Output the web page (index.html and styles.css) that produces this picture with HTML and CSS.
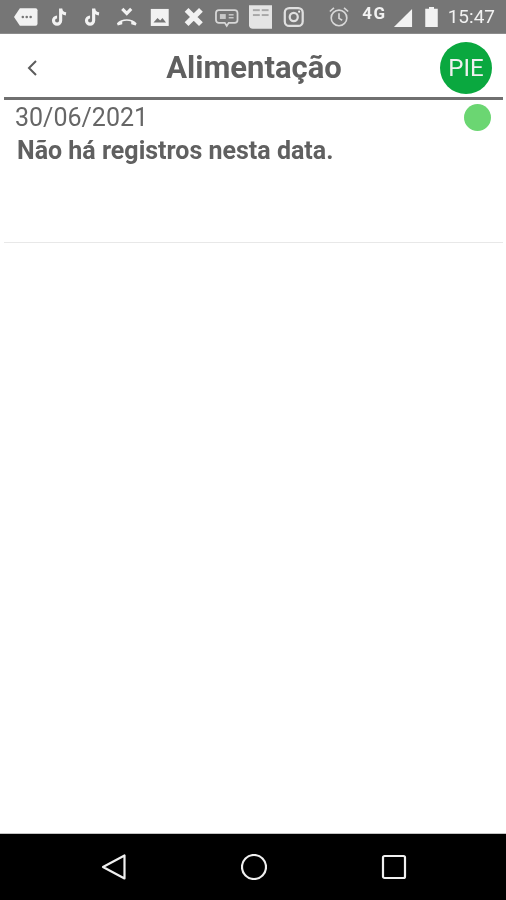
FILE: index.html
```html
<!DOCTYPE html>
<html lang="pt-BR">
<head>
  <meta charset="UTF-8">
  <meta name="viewport" content="width=device-width, initial-scale=1.0">
  <title>Alimentação</title>
  <link rel="stylesheet" href="styles.css">
</head>
<body>

  <div class="screen">

    <!-- Android status bar -->
    <div class="status-bar">
      <div class="notif-icons">
        <svg class="wide" viewBox="0 0 24 24"><path class="fill" d="M6 3h16a2 2 0 0 1 2 2v14a2 2 0 0 1-2 2H6l-6-9z"/><circle class="dark" cx="9" cy="12" r="1.3"/><circle class="dark" cx="13" cy="12" r="1.3"/><circle class="dark" cx="17" cy="12" r="1.3"/></svg>
        <svg viewBox="0 0 24 24"><path class="line" d="M13 2.5v13.5a4 4 0 1 1-4-4"/><path class="line" d="M13 3c.5 3 2.500 5 6 5.500"/></svg>
        <svg viewBox="0 0 24 24"><path class="line" d="M13 2.500v13.500a4 4 0 1 1-4-4"/><path class="line" d="M13 3c.5 3 2.500 5 6 5.500"/></svg>
        <svg viewBox="0 0 24 24"><path class="line" d="M7 3l5 5 5-5"/><path class="fill" d="M1 19c5-6 17-6 22 0l-1 2.500-5-1.500v-3c-3-1-7-1-10 0v3l-5 1.500z"/></svg>
        <svg viewBox="0 0 24 24"><rect class="fill" x="2" y="3" width="20" height="19"/><path class="dark" d="M5 18l4.500-5 3 3 2.500-3 4 5z"/></svg>
        <svg viewBox="0 0 24 24"><path class="cross" d="M4 4l16 16M20 4L4 20"/></svg>
        <svg class="wide" viewBox="0 0 24 24"><path class="thin" d="M4 5h16a3 3 0 0 1 3 3v7a3 3 0 0 1-3 3h-6l-2 3-2-3H4a3 3 0 0 1-3-3V8a3 3 0 0 1 3-3z"/><rect class="soft" x="5" y="9" width="6" height="5"/><rect class="soft" x="14" y="9" width="5" height="1.500"/><rect class="soft" x="14" y="12" width="5" height="1.500"/></svg>
        <svg class="wide" viewBox="0 0 24 24"><path class="book" d="M0 0h24v24H4a4 4 0 0 1-4-3z"/><rect class="dark-soft" x="4" y="4" width="7" height="2"/><rect class="dark-soft" x="13" y="4" width="7" height="2"/><rect class="dark-soft" x="4" y="9" width="7" height="2"/><rect class="dark-soft" x="13" y="9" width="7" height="2"/></svg>
        <svg viewBox="0 0 24 24"><rect class="thick" x="2" y="2" width="20" height="20" rx="5"/><circle class="thick" cx="12" cy="12" r="4.500"/><circle class="fill" cx="18" cy="6" r="1.200"/></svg>
      </div>
      <div class="system-icons">
        <svg class="alarm" viewBox="0 0 24 24"><circle class="thin" cx="12" cy="13" r="8.500"/><path class="thin" d="M12 8v5.500l3.500 2"/><path class="thin" d="M2 6l4.500-4M22 6l-4.500-4"/></svg>
        <span class="net">4G</span>
        <svg class="signal" viewBox="0 0 22 22"><path class="fill" d="M21 1v20H1z"/></svg>
        <svg class="battery" viewBox="0 0 15 24"><path class="fill" d="M4.500 0h6v2H15v22H0V2h4.500z"/></svg>
        <span class="clock">15:47</span>
      </div>
    </div>

    <div class="content">
      <div class="top-bar">
        <svg class="back" viewBox="0 0 12 18"><path d="M10 2L3 9l7 7"/></svg>
        <h1>Alimentação</h1>
        <div class="avatar">PIE</div>
      </div>

      <div class="day-row">
        <div class="day-head">
          <span class="day-date">30/06/2021</span>
          <span class="day-dot"></span>
        </div>
        <p class="day-empty">Não há registros nesta data.</p>
      </div>
    </div>

    <!-- Android nav bar -->
    <div class="nav-bar">
      <svg viewBox="0 0 26 26"><path d="M23.500 1.500v23L2 13z"/></svg>
      <svg viewBox="0 0 26 26"><circle cx="13" cy="13" r="12"/></svg>
      <svg viewBox="0 0 26 26"><rect x="2" y="2" width="22" height="22" rx="1.500"/></svg>
    </div>

  </div>

</body>
</html>
```

FILE: styles.css
```css
* {
  box-sizing: border-box;
}

html, body {
  margin: 0;
  padding: 0;
  height: 100%;
}

body {
  font-family: Roboto, 'Liberation Sans', sans-serif;
  background-color: #fff;
  color: #5c5c5c;
}

.screen {
  width: 506px;
  height: 900px;
  display: flex;
  flex-direction: column;
  overflow: hidden;
}

/* Status bar */
.status-bar {
  height: 34px;
  flex: none;
  background-color: #767676;
  border-bottom: 1px solid #8c8c8c;
  display: flex;
  align-items: center;
  padding-left: 9px;
  padding-right: 11px;
  color: #f2f2f2;
}

/* the reference is a soft, rescaled capture */
.status-bar svg, .net, .clock, .top-bar h1, .avatar, .day-date, .day-empty, .back, .nav-bar svg {
  filter: blur(0.4px);
}

.notif-icons {
  display: flex;
  align-items: center;
}

.notif-icons svg {
  width: 33.5px;
  height: 22px;
  padding: 0 6px;
}

.notif-icons svg.wide {
  height: 24px;
  padding: 0 5px;
}

.system-icons {
  margin-left: auto;
  display: flex;
  align-items: center;
}

.fill {
  fill: #f2f2f2;
}

.dark {
  fill: #767676;
}

.dark-soft {
  fill: #a8a8a8;
}

.soft {
  fill: #c8c8c8;
}

.book {
  fill: #e4e4e4;
}

.line, .thin, .thick, .cross {
  fill: none;
  stroke: #f2f2f2;
}

.line {
  stroke-width: 3.5;
}

.thin {
  stroke: #d8d8d8;
  stroke-width: 1.8;
}

.thick {
  stroke: #e0e0e0;
  stroke-width: 2.5;
}

.cross {
  stroke-width: 6;
}

.alarm {
  width: 22px;
  height: 22px;
}

.net {
  font-size: 17px;
  font-weight: 700;
  letter-spacing: 1.5px;
  margin-left: 12px;
  margin-bottom: 8px;
}

.signal {
  width: 22px;
  height: 20px;
  margin-left: 5px;
  margin-top: 3px;
}

.battery {
  width: 15px;
  height: 20px;
  margin-left: 10px;
  margin-top: 1px;
}

.clock {
  font-size: 19px;
  font-weight: 400;
  margin-left: 9px;
}

/* Page */
.content {
  flex: 1;
  background-color: #fff;
  padding: 0 3px 0 4px;
  border-bottom: 1px solid #c4c4c4;
}

.top-bar {
  height: 66px;
  display: flex;
  align-items: center;
  border-bottom: 3px solid #707070;
  padding: 4px 11px 0 22px;
}

.back {
  width: 12px;
  height: 18px;
  fill: none;
  stroke: #5c5c5c;
  stroke-width: 2;
}

.top-bar h1 {
  flex: 1;
  margin: 0;
  padding-left: 30px;
  text-align: center;
  font-size: 31px;
  font-weight: 700;
  color: #606060;
}

.avatar {
  width: 52px;
  height: 52px;
  border-radius: 50%;
  background-color: #0aa83f;
  color: #f0f0f0;
  font-size: 24px;
  display: flex;
  align-items: center;
  justify-content: center;
}

.day-row {
  height: 143px;
  border-bottom: 1px solid #e8e8e8;
  padding: 4px 12px 0 11px;
}

.day-head {
  display: flex;
  justify-content: space-between;
  align-items: flex-start;
  height: 28px;
}

.day-date {
  font-size: 25px;
  line-height: 28px;
  color: #666;
}

.day-dot {
  width: 27px;
  height: 27px;
  border-radius: 50%;
  background-color: #6bd672;
}

.day-empty {
  margin: 4px 0 0 2px;
  font-size: 25px;
  font-weight: 700;
  color: #606060;
}

/* Nav bar */
.nav-bar {
  height: 66px;
  flex: none;
  background-color: #000;
  display: flex;
  align-items: center;
  justify-content: center;
  gap: 114px;
  padding-left: 1px;
}

.nav-bar svg {
  width: 26px;
  height: 26px;
  fill: none;
  stroke: #f0f0f0;
  stroke-width: 2.2;
  stroke-linejoin: round;
}
```
